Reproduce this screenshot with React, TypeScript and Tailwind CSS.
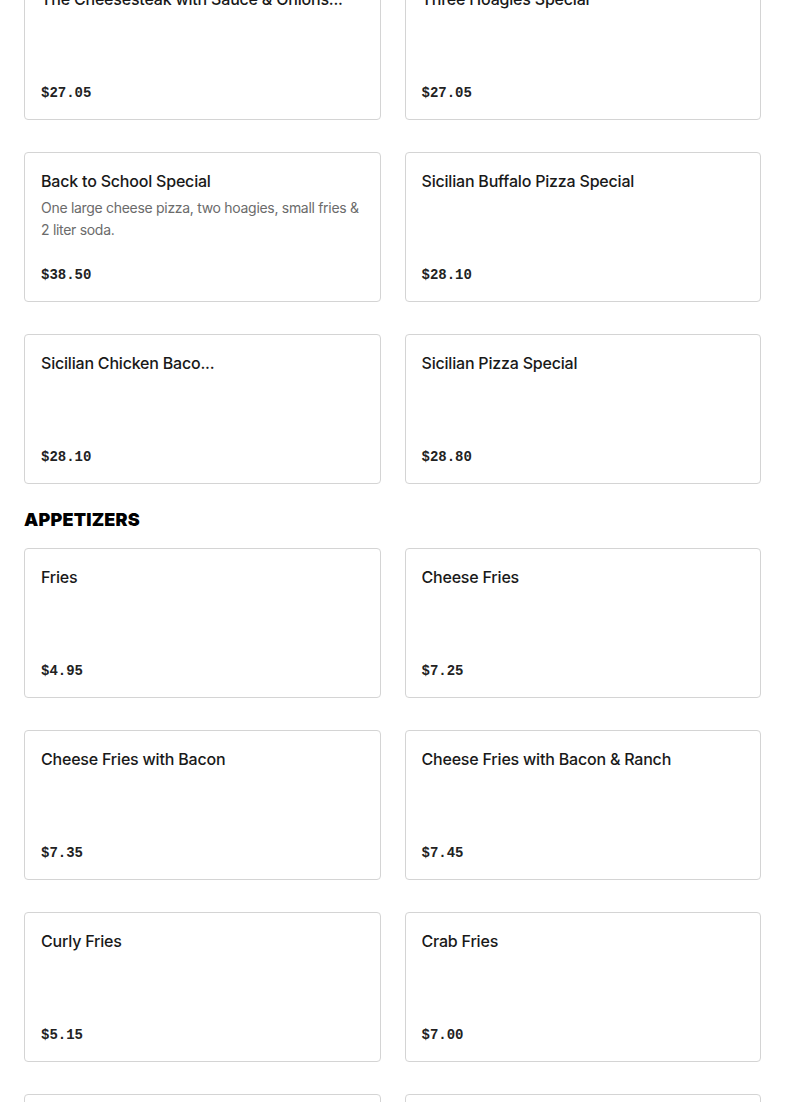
import React from 'react';

type Item = { name: string; desc?: string; price: string };

const specials: Item[] = [
  { name: 'The Cheesesteak with Sauce & Onions...', price: '$27.05' },
  { name: 'Three Hoagies Special', price: '$27.05' },
  { name: 'Back to School Special', desc: 'One large cheese pizza, two hoagies, small fries & 2 liter soda.', price: '$38.50' },
  { name: 'Sicilian Buffalo Pizza Special', price: '$28.10' },
  { name: 'Sicilian Chicken Baco...', price: '$28.10' },
  { name: 'Sicilian Pizza Special', price: '$28.80' },
];

const appetizers: Item[] = [
  { name: 'Fries', price: '$4.95' },
  { name: 'Cheese Fries', price: '$7.25' },
  { name: 'Cheese Fries with Bacon', price: '$7.35' },
  { name: 'Cheese Fries with Bacon & Ranch', price: '$7.45' },
  { name: 'Curly Fries', price: '$5.15' },
  { name: 'Crab Fries', price: '$7.00' },
  { name: 'Mozzarella Sticks', price: '$6.95' },
  { name: 'Onion Rings', price: '$5.95' },
];

const ItemCard: React.FC<{ item: Item }> = ({ item }) => (
  <div className="h-[150px] border border-[#d4d4d4] rounded-[4px] bg-white px-4 pt-4 pb-4 flex flex-col cursor-pointer">
    <h3 className="text-[16px] leading-6 font-medium tracking-[-0.2px] text-[#191919] truncate">{item.name}</h3>
    {item.desc && (
      <p className="mt-1 text-[14px] leading-[22px] tracking-[-0.3px] text-[#6b6b6b]">{item.desc}</p>
    )}
    <span className="mt-auto text-[14px] leading-5 font-bold text-[#222] font-['Liberation_Mono',monospace]">
      {item.price}
    </span>
  </div>
);

const App: React.FC = () => {
  return (
    <div className="min-h-screen bg-white overflow-hidden font-['Inter',sans-serif]">
      <main className="px-6 -mt-[30px]">
        <section className="grid grid-cols-2 gap-x-6 gap-y-8">
          {specials.map((item) => (
            <ItemCard key={item.name} item={item} />
          ))}
        </section>

        <h2 className="mt-6 mb-4 text-[18px] leading-6 font-black uppercase tracking-[0.01em] text-black">
          Appetizers
        </h2>
        <section className="grid grid-cols-2 gap-x-6 gap-y-8">
          {appetizers.map((item) => (
            <ItemCard key={item.name} item={item} />
          ))}
        </section>
      </main>
    </div>
  );
};

export default App;
